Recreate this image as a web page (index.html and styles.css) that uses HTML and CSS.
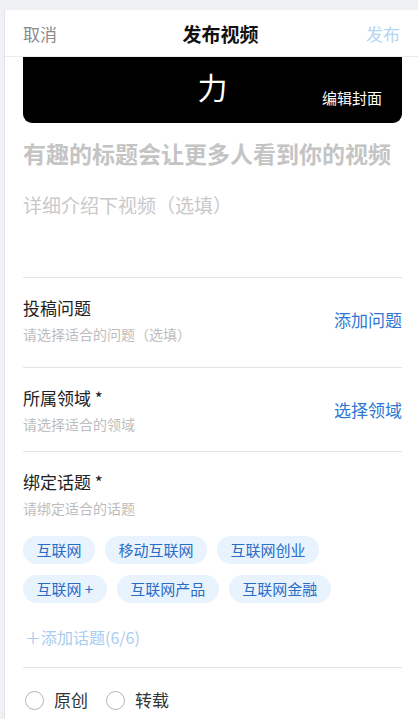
FILE: index.html
```html
<!DOCTYPE html>
<html lang="zh-CN">

<head>
    <meta charset="utf-8">
    <title>发布视频</title>
    <link rel="stylesheet" href="styles.css">
</head>

<body>
    <div class="sheet">
        <!-- top bar -->
        <div class="header">
            <span class="cancel">取消</span>
            <span class="title">发布视频</span>
            <span class="publish">发布</span>
        </div>

        <div class="content">
            <div class="cover">
                <span class="cover-text">力</span>
                <span class="cover-edit">编辑封面</span>
            </div>

            <input class="title-input" type="text" placeholder="有趣的标题会让更多人看到你的视频">
            <textarea class="desc-input" placeholder="详细介绍下视频（选填）"></textarea>

            <div class="field">
                <div class="field-row">
                    <div>
                        <div class="field-name">投稿问题</div>
                        <div class="field-hint wide">请选择适合的问题（选填）</div>
                    </div>
                    <span class="field-action">添加问题</span>
                </div>
            </div>

            <div class="field field-short">
                <div class="field-row">
                    <div>
                        <div class="field-name">所属领域 *</div>
                        <div class="field-hint">请选择适合的领域</div>
                    </div>
                    <span class="field-action">选择领域</span>
                </div>
            </div>

            <div class="field field-topics">
                <div class="field-name">绑定话题 *</div>
                <div class="field-hint">请绑定适合的话题</div>
                <div class="tags">
                    <span class="tag">互联网</span>
                    <span class="tag">移动互联网</span>
                    <span class="tag">互联网创业</span>
                    <span class="tag">互联网 +</span>
                    <span class="tag">互联网产品</span>
                    <span class="tag">互联网金融</span>
                </div>
                <div class="add-topic">＋添加话题(6/6)</div>
            </div>

            <div class="field radios">
                <label class="radio"><span class="circle"></span>原创</label>
                <label class="radio"><span class="circle"></span>转载</label>
            </div>
        </div>
    </div>
</body>

</html>
```

FILE: styles.css
```css
* {
    text-spacing-trim: space-all;
}

body {
    margin: 0;
    background: #eff1f4;
    font-family: "Noto Sans CJK SC", "Noto Sans", sans-serif;
}

.sheet {
    margin: 10px 0 0 4px;
    background: #fff;
    border-left: 1px solid #e1e3e6;
    min-height: 740px;
}

.header {
    display: grid;
    grid-template-columns: 1fr auto 1fr;
    align-items: center;
    height: 46px;
    padding: 0 18px;
    border-bottom: 1px solid #ebebeb;
}

.cancel {
    font-size: 17px;
    color: #8a8a8a;
}

.title {
    font-size: 19px;
    font-weight: 700;
    color: #111;
    padding-left: 18px;
}

.publish {
    justify-self: end;
    font-size: 17px;
    color: #b2d5f3;
}

.content {
    padding: 0 16px 0 18px;
}

.cover {
    position: relative;
    height: 66px;
    background: #000;
    border-radius: 0 0 9px 9px;
    display: flex;
    align-items: center;
    justify-content: center;
    padding-bottom: 8px;
    box-sizing: border-box;
}

.cover-text {
    font-size: 30px;
    line-height: 36px;
    color: #fff;
}

.cover-edit {
    position: absolute;
    right: 20px;
    bottom: 15px;
    font-size: 15px;
    line-height: 20px;
    color: #fff;
}

.title-input,
.desc-input {
    display: block;
    width: 100%;
    border: none;
    outline: none;
    padding: 0;
    margin: 0;
    font-family: inherit;
    background: transparent;
    resize: none;
}

.title-input {
    margin-top: 15px;
    height: 30px;
    font-size: 23px;
    line-height: 30px;
    font-weight: 700;
}

.title-input::placeholder {
    color: #c4c4c4;
}

.desc-input {
    margin-top: 24px;
    height: 85px;
    font-size: 19px;
    line-height: 26px;
    font-feature-settings: "fwid";
}

.desc-input::placeholder {
    color: #c9c9c9;
}

.field {
    border-top: 1px solid #e4e4e4;
    padding: 18px 0 24px;
}

.field-short {
    padding-bottom: 18px;
}

.field-topics {
    padding-bottom: 20px;
}

.field-row {
    display: flex;
    align-items: center;
    justify-content: space-between;
}

.field-name {
    font-size: 17px;
    line-height: 24px;
    color: #222;
}

.field-hint {
    margin-top: 5px;
    font-size: 14px;
    line-height: 18px;
    color: #bdbdbd;
}

.wide {
    font-feature-settings: "fwid";
}

.field-action {
    font-size: 17px;
    color: #2f78d2;
}

.tags {
    display: flex;
    flex-wrap: wrap;
    gap: 11px 10px;
    margin-top: 19px;
}

.tag {
    height: 28px;
    line-height: 28px;
    padding: 0 13.5px;
    border-radius: 14px;
    background: #e8f3fe;
    color: #2a6dc5;
    font-size: 15px;
}

.add-topic {
    margin-top: 24px;
    font-size: 16px;
    line-height: 20px;
    color: #a8cdf0;
    padding-left: 2px;
}

.radios {
    display: flex;
    gap: 18px;
    padding: 22px 0 0 2px;
}

.radio {
    display: flex;
    align-items: center;
    font-size: 17px;
    line-height: 20px;
    color: #333;
}

.circle {
    width: 17px;
    height: 17px;
    border: 1.5px solid #b5b5b5;
    border-radius: 50%;
    margin-right: 10px;
}
```
